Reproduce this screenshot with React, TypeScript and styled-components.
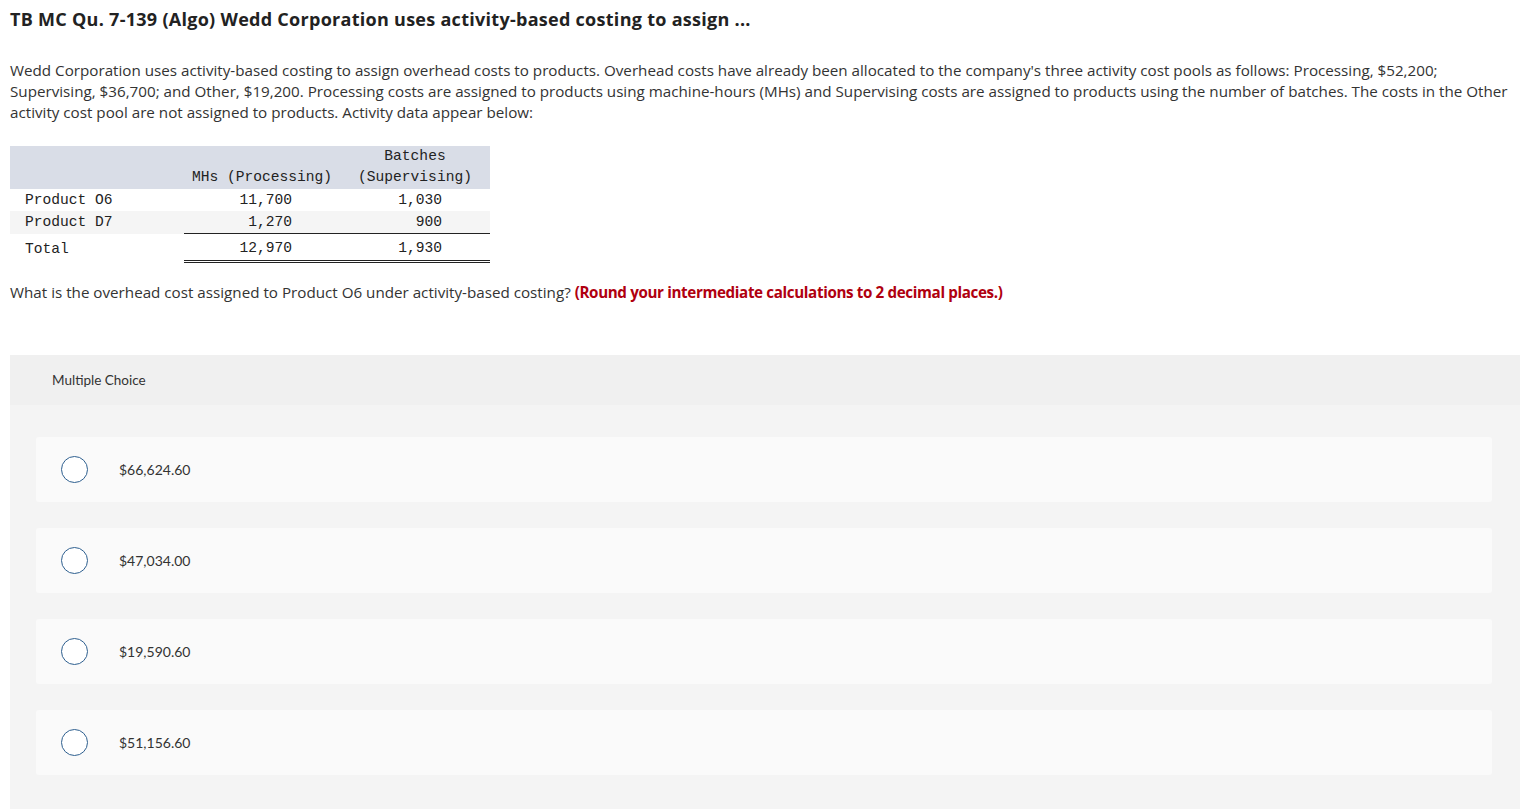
import React from "react";
import styled, { createGlobalStyle } from "styled-components";

const GlobalStyle = createGlobalStyle`
  html, body {
    margin: 0;
    padding: 0;
    background: #fff;
  }
  body {
    font-family: "Open Sans", Lato, "Liberation Sans", sans-serif;
    color: #333;
  }
`;

const rows = [
  { label: "Product O6", mhs: "11,700", batches: "1,030", shade: false },
  { label: "Product D7", mhs: "1,270", batches: "900", shade: true },
];

const choices = ["$66,624.60", "$47,034.00", "$19,590.60", "$51,156.60"];

const App = () => {
  return (
    <>
      <GlobalStyle />
      <Page>
        <Title>
          TB MC Qu. 7-139 (Algo) Wedd Corporation uses activity-based costing to assign ...
        </Title>
        <Intro>
          Wedd Corporation uses activity-based costing to assign overhead costs to products.
          Overhead costs have already been allocated to the company's three activity cost pools
          as follows: Processing, $52,200; Supervising, $36,700; and Other, $19,200. Processing
          costs are assigned to products using machine-hours (MHs) and Supervising costs are
          assigned to products using the number of batches. The costs in the Other activity
          cost pool are not assigned to products. Activity data appear below:
        </Intro>
        <DataTable>
          <thead>
            <tr>
              <HeadCell />
              <HeadCell>MHs (Processing)</HeadCell>
              <HeadCell>
                Batches
                <br />
                (Supervising)
              </HeadCell>
            </tr>
          </thead>
          <tbody>
            {rows.map((r, i) => (
              <Row key={i} $shade={r.shade}>
                <LabelCell>{r.label}</LabelCell>
                <NumCell $rule={i === rows.length - 1 ? "single" : undefined}>{r.mhs}</NumCell>
                <NumCell $rule={i === rows.length - 1 ? "single" : undefined}>{r.batches}</NumCell>
              </Row>
            ))}
            <Row>
              <LabelCell $total>Total</LabelCell>
              <NumCell $total $rule="double">12,970</NumCell>
              <NumCell $total $rule="double">1,930</NumCell>
            </Row>
          </tbody>
        </DataTable>
        <Question>
          What is the overhead cost assigned to Product O6 under activity-based costing?{" "}
          <strong>(Round your intermediate calculations to 2 decimal places.)</strong>
        </Question>
        <ChoicePanel>
          <PanelHead>Multiple Choice</PanelHead>
          <PanelBody>
            {choices.map((c) => (
              <Choice key={c}>
                <Radio />
                <ChoiceText>{c}</ChoiceText>
              </Choice>
            ))}
          </PanelBody>
        </ChoicePanel>
      </Page>
    </>
  );
};

export default App;

const Page = styled.div`
  padding: 7px 0 0 10px;
`;

const Title = styled.h1`
  margin: 0;
  font-size: 18px;
  font-weight: 700;
  line-height: 24px;
  color: #222;
  letter-spacing: 0.28px;
`;

const Intro = styled.p`
  margin: 29px 10px 0 0;
  font-size: 15.2px;
  line-height: 21px;
`;

const DataTable = styled.table`
  margin-top: 23px;
  border-collapse: collapse;
  width: 480px;
  font-family: "Liberation Mono", "DejaVu Sans Mono", monospace;
  font-size: 14.6px;
  color: #222;
`;

const HeadCell = styled.th`
  background: #d9dde7;
  font-weight: 400;
  text-align: center;
  vertical-align: bottom;
  line-height: 21px;
  padding: 0 0 1px;
  &:first-child {
    width: 174px;
  }
  &:nth-child(2) {
    width: 156px;
  }
`;

const Row = styled.tr<{ $shade?: boolean }>`
  background: ${(p) => (p.$shade ? "#f5f5f5" : "transparent")};
`;

const LabelCell = styled.td<{ $total?: boolean }>`
  padding: ${(p) => (p.$total ? "3px 0 1px 15px" : "0 0 0 15px")};
  line-height: 22px;
  text-align: left;
`;

const NumCell = styled.td<{ $total?: boolean; $rule?: "single" | "double" }>`
  padding: ${(p) => (p.$total ? "3px 48px 1px 0" : "0 48px 0 0")};
  line-height: 22px;
  text-align: right;
  border-bottom: ${(p) =>
    p.$rule === "single" ? "1px solid #222" : p.$rule === "double" ? "3px double #222" : "none"};
`;

const Question = styled.p`
  margin: 19px 0 0;
  font-size: 15.2px;
  line-height: 21px;
  strong {
    color: #b0000f;
    font-weight: 700;
    letter-spacing: -0.37px;
  }
`;

const ChoicePanel = styled.section`
  margin-top: 52px;
  background: #f4f4f4;
`;

const PanelHead = styled.div`
  height: 50px;
  display: flex;
  align-items: center;
  padding-left: 42px;
  background: #f0f0f0;
  font-family: Lato, "Open Sans", sans-serif;
  font-size: 13.5px;
  color: #333;
`;

const PanelBody = styled.div`
  display: flex;
  flex-direction: column;
  gap: 26px;
  padding: 32px 28px 34px 26px;
`;

const Choice = styled.div`
  height: 65px;
  display: flex;
  align-items: center;
  padding-left: 25px;
  background: #fafafa;
  border-radius: 3px;
`;

const Radio = styled.span`
  width: 25px;
  height: 25px;
  border: 1.5px solid #2e5f8f;
  border-radius: 50%;
  background: #fff;
  flex-shrink: 0;
`;

const ChoiceText = styled.span`
  margin-left: 31px;
  font-family: Lato, "Open Sans", sans-serif;
  font-size: 14px;
  color: #333;
`;
